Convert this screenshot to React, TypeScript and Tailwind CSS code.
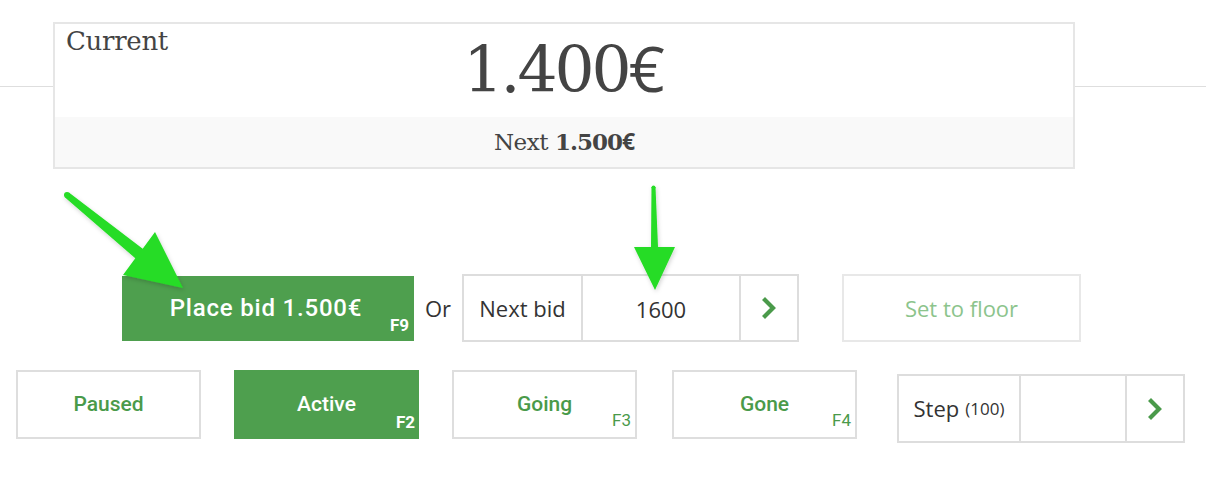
import React from 'react'

const slab = "font-['DejaVu_Serif',serif]"
const sans = "font-['Open_Sans',sans-serif]"
const roboto = "font-['Roboto',sans-serif]"

function Chevron() {
  return (
    <svg width="18" height="22" viewBox="0 0 18 22" className="text-[#4a9a4a]">
      <polyline points="5,3 13,11 5,19" fill="none" stroke="currentColor" strokeWidth="4.2" strokeLinecap="square" strokeLinejoin="miter" />
    </svg>
  )
}

function StateButton({ label, fkey, active }: { label: string; fkey?: string; active?: boolean }) {
  return (
    <div
      className={`relative w-[185px] h-[69px] flex items-center justify-center ${roboto} text-[21px] font-medium ${
        active ? 'bg-[#4e9f4e] text-white' : 'border-2 border-[#dedede] text-[#4a9a4a]'
      }`}
    >
      <span className="pt-[1px]">{label}</span>
      {fkey && (
        <span
          className={`absolute right-[4px] bottom-[8px] text-[17px] leading-none ${active ? 'font-bold' : 'font-normal'}`}
        >
          {fkey}
        </span>
      )}
    </div>
  )
}

function Arrows() {
  return (
    <svg className="absolute inset-0 pointer-events-none" width="1206" height="478" viewBox="0 0 1206 478">
      <defs>
        <filter id="sh" x="-20%" y="-20%" width="140%" height="140%">
          <feDropShadow dx="1" dy="2" stdDeviation="2" floodColor="#000" floodOpacity="0.18" />
        </filter>
      </defs>
      <g fill="#25dc25" filter="url(#sh)">
        <polygon points="68.9,192.6 142.7,248.8 155,232 183,288 123,275 135.3,258.2 65.1,197.4" />
        <circle cx="67" cy="195" r="3" />
        <polygon points="655.5,187 658,247 675,247 655,290 634,247 651,247 651.5,187" />
        <circle cx="653.5" cy="187.5" r="2" />
      </g>
    </svg>
  )
}

export default function App() {
  return (
    <div className="relative w-[1206px] h-[478px] bg-white overflow-hidden text-[#333]">
      {/* header rule */}
      <div className="h-[87px] border-b border-[#dedede]" />

      {/* Current bid panel */}
      <div className="relative -mt-[65px] ml-[53px] w-[1022px] border-2 border-[#e6e6e6] bg-white">
        <div className="grid grid-cols-[1fr_auto_1fr] h-[93px]">
          <div className={`pl-[11px] pt-[1px] ${slab} text-[26px] leading-[32px] text-[#444] tracking-[-0.3px]`}>Current</div>
          <div className={`${slab} text-[63px] leading-none pt-[12px] text-[#444] tracking-[-3px]`}>
            1.400<span className={`${sans} tracking-normal`}>€</span>
          </div>
          <div />
        </div>
        <div className="h-[50px] bg-[#f9f9f9] flex items-center justify-center text-[#444]">
          <span className={`${slab} text-[23px] tracking-[-0.5px]`}>Next</span>
          <span className={`${slab} text-[23px] font-bold ml-[7px] tracking-[-1px]`}>
            1.500<span className={`${sans}`}>€</span>
          </span>
        </div>
      </div>

      {/* bid row */}
      <div className="flex items-center mt-[105px] ml-[122px] h-[68px]">
        <div className={`relative w-[292px] h-[65px] bg-[#4e9f4e] text-white flex items-center justify-center ${roboto} text-[24px] font-medium tracking-[0.8px]`}>
          <span className="-ml-[4px] -mt-[1px]">Place bid 1.500€</span>
          <span className="absolute right-[5px] bottom-[7px] text-[17px] leading-none font-bold tracking-normal">F9</span>
        </div>
        <div className={`w-[48px] text-center ${sans} text-[22px] text-[#333]`}>Or</div>
        <div className={`flex w-[337px] h-[68px] border-2 border-[#dddddd] ${sans} text-[22px] text-[#333]`}>
          <div className="w-[119px] flex items-center justify-center border-r-2 border-[#dddddd]">Next bid</div>
          <div className="w-[158px] flex items-center justify-center border-r-2 border-[#dddddd] pt-[2px]">1600</div>
          <div className="flex-1 flex items-center justify-center">
            <Chevron />
          </div>
        </div>
        <div className={`ml-[43px] w-[239px] h-[68px] border-2 border-[#e8e8e8] flex items-center justify-center ${sans} text-[22px] text-[#8cc48c]`}>
          Set to floor
        </div>
      </div>

      {/* state row */}
      <div className="flex items-start mt-[28px] ml-[16px]">
        <StateButton label="Paused" />
        <div className="ml-[33px]">
          <StateButton label="Active" fkey="F2" active />
        </div>
        <div className="ml-[33px]">
          <StateButton label="Going" fkey="F3" />
        </div>
        <div className="ml-[35px]">
          <StateButton label="Gone" fkey="F4" />
        </div>
        <div className={`ml-[40px] mt-[4px] flex w-[288px] h-[69px] border-2 border-[#dddddd] ${sans} text-[#333]`}>
          <div className="w-[122px] flex items-center justify-center border-r-2 border-[#dddddd] text-[22px]">
            Step<span className="text-[17px] ml-[6px]">(100)</span>
          </div>
          <div className="w-[106px] border-r-2 border-[#dddddd]" />
          <div className="flex-1 flex items-center justify-center">
            <Chevron />
          </div>
        </div>
      </div>

      <Arrows />
    </div>
  )
}
